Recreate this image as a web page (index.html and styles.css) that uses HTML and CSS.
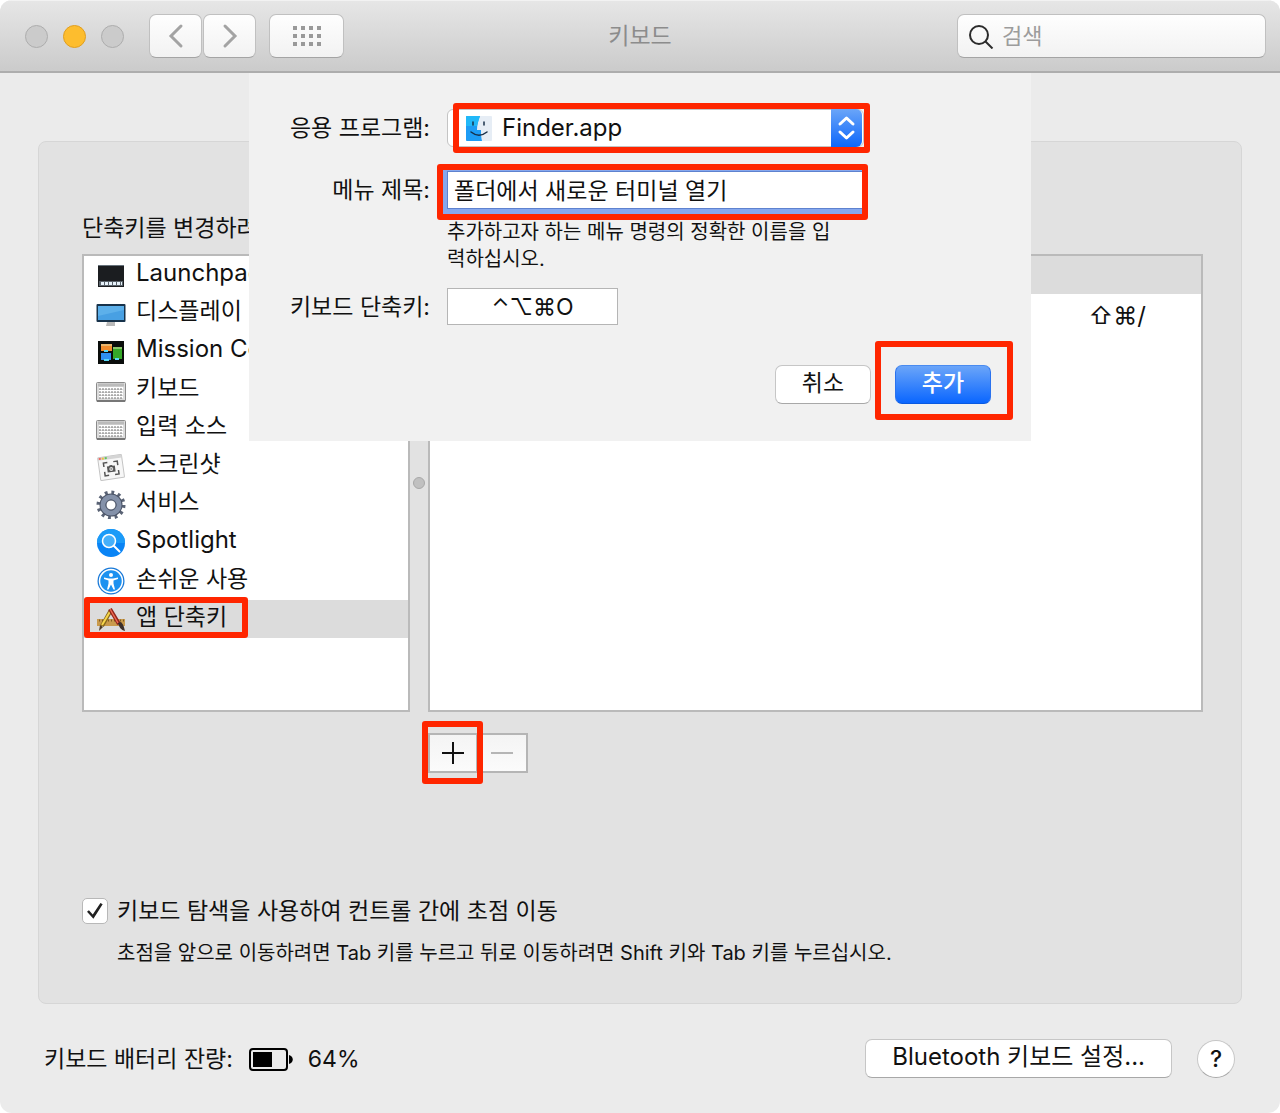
FILE: index.html
```html
<!DOCTYPE html>
<html lang="ko">

<head>
    <meta charset="UTF-8">
    <meta name="viewport" content="width=device-width, initial-scale=1.0">
    <title>키보드</title>
    <link rel="stylesheet" href="styles.css">
</head>

<body>
    <div class="window">

        <header class="titlebar">
            <div class="lights">
                <span class="light"></span>
                <span class="light light-yellow"></span>
                <span class="light"></span>
            </div>
            <nav class="nav-buttons">
                <button type="button" class="tool-btn" aria-label="뒤로">
                    <svg width="16" height="26" viewBox="0 0 16 26"><path d="M13 3 3 13l10 10" /></svg>
                </button>
                <button type="button" class="tool-btn" aria-label="앞으로">
                    <svg width="16" height="26" viewBox="0 0 16 26"><path d="m3 3 10 10L3 23" /></svg>
                </button>
            </nav>
            <button type="button" class="tool-btn tool-grid" aria-label="모두 보기">
                <svg width="28" height="20" viewBox="0 0 28 20">
                    <path d="M0 2h28M0 10h28M0 18h28" />
                </svg>
            </button>
            <h1>키보드</h1>
            <div class="search">
                <svg width="26" height="26" viewBox="0 0 26 26"><circle cx="11" cy="12" r="9" /><path d="m17.500 18.500 7 7" /></svg>
                <input type="search" placeholder="검색" aria-label="검색">
            </div>
        </header>

        <main>
            <section class="panel">
                <p class="intro">단축키를 변경하려면</p>

                <div class="lists">
                    <ul class="categories">
                        <li class="latin">
                            <svg class="icon" viewBox="0 0 30 30">
                                <rect x="2" y="5" width="26" height="22" fill="#1b1d20" />
                                <rect x="2" y="5" width="26" height="1" fill="#66717a" />
                                <rect x="3" y="21" width="24" height="5" fill="#59626a" />
                                <path d="M5 23.500h21" stroke="#e6f2fa" stroke-width="3" stroke-dasharray="3 1" />
                            </svg>
                            Launchpad
                        </li>
                        <li>
                            <svg class="icon" viewBox="0 0 30 30">
                                <path d="M11 24h8v4h-9z" fill="#b9b9b9" />
                                <rect x=".5" y="6" width="29" height="18" rx="1" fill="#17324a" />
                                <rect x="2" y="8" width="26" height="14" fill="#48a0e3" />
                                <path d="M2 8h26v4L2 18z" fill="#5db0ea" />
                            </svg>
                            디스플레이
                        </li>
                        <li class="latin">
                            <svg class="icon" viewBox="0 0 30 30">
                                <rect x="2" y="5" width="26" height="23" fill="#0a0d0b" />
                                <rect x="5" y="8" width="11" height="7" fill="#f08c2c" />
                                <rect x="5" y="17" width="10" height="7" fill="#2e8ff0" />
                                <rect x="17" y="11" width="9" height="12" fill="#35a828" />
                                <path d="M5 9h11M17 12h9" stroke="#e3e3b0" />
                                <path d="M8 15h4M8 24h5M19 23h4" stroke="#58d8f5" stroke-width="2" />
                            </svg>
                            Mission Control
                        </li>
                        <li>
                            <svg class="icon" viewBox="0 0 30 30">
                                <rect x=".5" y="8.500" width="29" height="19" rx="1" fill="#dcdcdc" stroke="#8b8b8b" />
                                <path d="M1 27h28" stroke="#777" stroke-width="2" />
                                <path d="M3 14h24M3 17h24M3 20h24M3 23h24" stroke="#fff" stroke-width="2" />
                                <path d="M3 15h24M3 18h24M3 21h24M3 24h24" stroke="#777" stroke-dasharray="2 1" />
                                <path d="M2 11h26" stroke="#bbb" stroke-width="3" />
                            </svg>
                            키보드
                        </li>
                        <li>
                            <svg class="icon" viewBox="0 0 30 30">
                                <rect x=".5" y="8.500" width="29" height="19" rx="1" fill="#dcdcdc" stroke="#8b8b8b" />
                                <path d="M1 27h28" stroke="#777" stroke-width="2" />
                                <path d="M3 14h24M3 17h24M3 20h24M3 23h24" stroke="#fff" stroke-width="2" />
                                <path d="M3 15h24M3 18h24M3 21h24M3 24h24" stroke="#777" stroke-dasharray="2 1" />
                                <path d="M2 11h26" stroke="#bbb" stroke-width="3" />
                            </svg>
                            입력 소스
                        </li>
                        <li>
                            <svg class="icon" viewBox="0 0 30 30">
                                <g transform="rotate(-8 15 16)">
                                    <rect x="3" y="5" width="24" height="23" rx="1" fill="#f7f7f7" stroke="#c4c4c4" />
                                    <path d="M3 6.500h24" stroke="#d5d5d5" stroke-width="3" />
                                    <path d="M4 6.500h2" stroke="#f0645c" stroke-width="2" />
                                    <path d="M7 6.500h2" stroke="#f2bd3d" stroke-width="2" />
                                    <path d="M10 6.500h2" stroke="#5fc457" stroke-width="2" />
                                    <path d="M8 15v-4h4M18 11h4v4M22 20v4h-4M12 24H8v-4" fill="none" stroke="#555" stroke-width="1.500" />
                                    <path d="M11 15h2l1-1h2l1 1h2v6h-8z" fill="#555" />
                                    <circle cx="15" cy="18" r="1.500" fill="#999" stroke="#ddd" />
                                </g>
                            </svg>
                            스크린샷
                        </li>
                        <li>
                            <svg class="icon" viewBox="0 0 30 30">
                                <circle cx="15" cy="16" r="12.500" fill="none" stroke="#5a6375" stroke-width="4" stroke-dasharray="2.800 3.745" />
                                <circle cx="15" cy="16" r="8" fill="none" stroke="#4b5467" stroke-width="7" />
                                <circle cx="15" cy="16" r="8" fill="none" stroke="#8491a9" stroke-width="5" />
                                <circle cx="15" cy="16" r="5" fill="#fff" stroke="#4b5467" />
                            </svg>
                            서비스
                        </li>
                        <li class="latin">
                            <svg class="icon" viewBox="0 0 30 30">
                                <circle cx="15" cy="16" r="14" fill="#0a84f5" />
                                <path d="M1 16a14 14 0 0 1 28 0z" fill="#1b9bf8" />
                                <circle cx="13" cy="14" r="6.500" fill="#47b0fa" stroke="#fff" stroke-width="1.500" />
                                <path d="m18 19 5.500 5.500" stroke="#fff" stroke-width="2" stroke-linecap="round" />
                            </svg>
                            Spotlight
                        </li>
                        <li>
                            <svg class="icon" viewBox="0 0 30 30">
                                <circle cx="15" cy="16" r="13.500" fill="#1778d8" />
                                <circle cx="15" cy="16" r="11.500" fill="#1c91f0" stroke="#fff" stroke-width="1.500" />
                                <circle cx="15" cy="10" r="2" fill="#fff" />
                                <path d="m8 12.500 5 1h4l5-1v1.500l-4.500 1.500v3l1.500 6h-1.500L15 19.500l-2.500 5H11l1.500-6v-3L8 14z" fill="#fff" />
                            </svg>
                            손쉬운 사용
                        </li>
                        <li class="selected">
                            <svg class="icon" viewBox="0 0 30 30">
                                <rect x="1" y="16" width="28" height="7" fill="#c99a4c" />
                                <path d="M3 17.500h25" stroke="#7d5a23" stroke-width="2" stroke-dasharray="1 2" />
                                <path d="m15 7-9 16" stroke="#87681c" stroke-width="4" />
                                <path d="M15 7 6 22" stroke="#f7d64c" stroke-width="2" />
                                <path d="m4 22 3 2-4 4z" fill="#4d3a25" />
                                <path d="m14 6 9 15" stroke="#8f231b" stroke-width="4" />
                                <path d="m14 6 8 14" stroke="#ee6b50" stroke-width="1.500" />
                                <path d="m22 20 3-1c3 3 3 6 4 9-4-1-6-4-7-8z" fill="#3c302b" />
                            </svg>
                            앱 단축키
                        </li>
                    </ul>

                    <div class="divider"><span></span></div>

                    <ul class="shortcuts">
                        <li class="selected"></li>
                        <li class="latin">⇧⌘/</li>
                    </ul>
                </div>

                <div class="list-buttons">
                    <div class="marked mark-add">
                        <button type="button" aria-label="추가">
                            <svg width="22" height="22" viewBox="0 0 22 22"><path d="M11 0v22M0 11h22" /></svg>
                        </button>
                    </div>
                    <button type="button" class="remove" aria-label="제거" disabled>
                        <svg width="22" height="22" viewBox="0 0 22 22"><path d="M0 11h22" /></svg>
                    </button>
                </div>

                <div class="navigation">
                    <input type="checkbox" id="tab-nav" checked>
                    <label for="tab-nav">키보드 탐색을 사용하여 컨트롤 간에 초점 이동</label>
                    <p>초점을 앞으로 이동하려면 Tab 키를 누르고 뒤로 이동하려면 Shift 키와 Tab 키를 누르십시오.</p>
                </div>
            </section>

            <!-- 단축키 추가 시트 -->
            <form class="sheet">
                <label for="app">응용 프로그램:</label>
                <div class="marked mark-app">
                    <select id="app" class="latin">
                        <option>Finder.app</option>
                    </select>
                    <svg class="finder" width="26" height="25" viewBox="0 0 26 25">
                        <rect width="26" height="25" rx="1" fill="#e6edf5" />
                        <path d="M1 0h13c-2 5-3 9-3 14h4c0 4 0 7 1 11H1a1 1 0 0 1-1-1V1a1 1 0 0 1 1-1z" fill="#1d9cf5" />
                        <path d="M1 0h13c-1 3-2 6-3 10H0V1a1 1 0 0 1 1-1z" fill="#21b8f8" />
                        <path d="M7 6v3M18 6v3M5 16c5 4 11 4 16 0" fill="none" stroke="#18304a" stroke-width="1.500" stroke-linecap="round" />
                    </svg>
                    <svg class="stepper" width="31" height="38" viewBox="0 0 31 38">
                        <path d="m9 15 6.500-6 6.500 6M9 23l6.500 6 6.500-6" />
                    </svg>
                </div>

                <label for="menu-title">메뉴 제목:</label>
                <div class="marked mark-title">
                    <input type="text" id="menu-title" value="폴더에서 새로운 터미널 열기">
                </div>
                <p class="hint">추가하고자 하는 메뉴 명령의 정확한 이름을 입력하십시오.</p>

                <label for="shortcut">키보드 단축키:</label>
                <input type="text" id="shortcut" value="⌃⌥⌘O">

                <div class="actions">
                    <button type="button" class="btn">취소</button>
                    <div class="marked mark-submit">
                        <button type="submit" class="btn btn-primary">추가</button>
                    </div>
                </div>
            </form>
        </main>

        <footer>
            <span>키보드 배터리 잔량:</span>
            <svg class="battery" width="44" height="24" viewBox="0 0 44 24">
                <rect x="1" y="1" width="37" height="21" rx="3" fill="none" stroke="#000" stroke-width="2" />
                <rect x="4" y="4" width="19" height="15" />
                <path d="M40 7c5 1 5 8 0 9z" />
            </svg>
            <span>64%</span>
            <button type="button" class="btn btn-bluetooth latin">Bluetooth 키보드 설정...</button>
            <button type="button" class="btn help">?</button>
        </footer>

    </div>
</body>

</html>
```
FILE: styles.css
```css
* {
    box-sizing: border-box;
}

body {
    margin: 0;
    background-color: #fff;
    color: #111;
    font-family: Inter, 'Noto Sans CJK KR', sans-serif;
    font-size: 23px;
    line-height: 32px;
}

button,
input,
select {
    margin: 0;
    font: inherit;
    color: inherit;
}

h1,
p,
ul {
    margin: 0;
    padding: 0;
}

ul {
    list-style: none;
}

svg {
    display: block;
    flex: none;
}

.latin {
    font-size: 24px;
}

.window {
    display: flex;
    flex-direction: column;
    min-height: 100vh;
    background-color: #ebebeb;
    border-radius: 12px;
    overflow: hidden;
}

/* 제목 막대 */
.titlebar {
    position: relative;
    display: flex;
    align-items: center;
    height: 73px;
    padding: 0 14px 0 25px;
    background: linear-gradient(#e6e6e6, #cbcbcb);
    border-top: 1px solid #f2f2f2;
    border-bottom: 2px solid #adadad;
}

.lights {
    display: flex;
    gap: 15px;
    margin-right: 25px;
}

.light {
    width: 23px;
    height: 23px;
    border: 1px solid #adadad;
    border-radius: 50%;
    background-color: #cbcbcb;
}

.light-yellow {
    background-color: #fdbd2e;
    border-color: #e09e20;
}

.nav-buttons {
    display: flex;
    gap: 1px;
    margin-right: 13px;
}

.tool-btn {
    display: flex;
    align-items: center;
    justify-content: center;
    width: 53px;
    height: 44px;
    padding: 0;
    background: linear-gradient(#fefefe, #f2f2f2);
    border: 1px solid #c0c0c0;
    border-bottom-color: #a4a4a4;
    border-radius: 7px;
}

.tool-btn svg {
    fill: none;
    stroke: #a3a3a3;
    stroke-width: 3;
    stroke-linecap: round;
}

.tool-grid {
    width: 75px;
}

.tool-grid svg {
    stroke: #999;
    stroke-width: 4;
    stroke-linecap: butt;
    stroke-dasharray: 4 4;
}

.titlebar h1 {
    position: absolute;
    left: 50%;
    transform: translateX(-50%);
    font-size: 23px;
    font-weight: 400;
    color: #8c8c8c;
}

.search {
    display: flex;
    align-items: center;
    gap: 8px;
    width: 309px;
    height: 44px;
    margin-left: auto;
    padding: 0 10px;
    background: linear-gradient(#fefefe, #f2f2f2);
    border: 1px solid #c0c0c0;
    border-bottom-color: #a4a4a4;
    border-radius: 7px;
}

.search svg {
    fill: none;
    stroke: #2b2b2b;
    stroke-width: 2;
}

.search input {
    flex: 1;
    min-width: 0;
    padding: 0;
    border: 0;
    background: none;
    outline: none;
    font-size: 22px;
}

.search input::placeholder {
    color: #9c9c9c;
}

/* 본문 */
main {
    position: relative;
    padding: 68px 38px 0;
}

.panel {
    padding: 70px 38px 34px 43px;
    background-color: #e2e2e2;
    border: 1px solid #d6d6d6;
    border-radius: 8px;
}

.intro {
    margin-bottom: 10px;
}

.lists {
    display: flex;
}

.categories,
.shortcuts {
    background-color: #fff;
    border: 2px solid #bababa;
}

.categories {
    display: grid;
    grid-template-rows: repeat(10, 1fr);
    width: 328px;
    height: 458px;
    padding-bottom: 72px;
}

.shortcuts {
    flex: 1;
}

.categories li {
    display: flex;
    align-items: center;
    gap: 10px;
    min-height: 0;
    padding: 0 12px 4px;
}

.shortcuts li {
    height: 38px;
    padding: 6px 55px 0;
    text-align: right;
}

.lists .selected {
    background-color: #dcdcdc;
}

.icon {
    width: 30px;
    height: 30px;
    margin-top: 3px;
}

.divider {
    display: flex;
    align-items: center;
    justify-content: center;
    width: 18px;
}

.divider span {
    width: 12px;
    height: 12px;
    border: 1px solid #a8a8a8;
    border-radius: 50%;
    background-color: #c0c0c0;
}

.list-buttons {
    display: flex;
    margin: 21px 0 122px 346px;
}

.list-buttons button {
    display: flex;
    align-items: center;
    justify-content: center;
    width: 50px;
    height: 40px;
    padding: 0;
    background: linear-gradient(#f4f4f4, #fbfbfb);
    border: 2px solid #b5b5b5;
}

.list-buttons .remove {
    border-left: 0;
}

.list-buttons svg {
    stroke: #111;
    stroke-width: 2;
}

.list-buttons .remove svg {
    stroke: #b5b5b5;
}

.navigation {
    display: grid;
    grid-template-columns: 26px 1fr;
    align-items: center;
    column-gap: 9px;
    row-gap: 10px;
}

.navigation p {
    grid-column: 2;
    font-size: 20px;
}

input[type="checkbox"] {
    appearance: none;
    width: 26px;
    height: 26px;
    background-color: #fff;
    border: 1px solid #b8b8b8;
    border-radius: 5px;
    display: grid;
    place-items: center;
}

input[type="checkbox"]:checked::before {
    content: "";
    width: 16px;
    height: 16px;
    background-color: #222;
    clip-path: polygon(0 55%, 12% 46%, 36% 72%, 84% 0, 98% 8%, 40% 98%);
}

/* 시트 */
.sheet {
    position: absolute;
    top: 0;
    left: 50%;
    transform: translateX(-50%);
    display: grid;
    grid-template-columns: 181px 1fr;
    column-gap: 17px;
    align-items: center;
    width: 782px;
    padding: 36px 40px 37px 0;
    background-color: #f1f1f1;
}

.sheet label {
    text-align: right;
}

.sheet input {
    display: block;
    background-color: #fff;
    outline: none;
}

.sheet select {
    display: block;
    appearance: none;
    width: 100%;
    height: 38px;
    padding: 0 40px 0 54px;
    background-color: #fff;
    border: 1px solid #c4c4c4;
    border-radius: 6px;
}

.finder {
    position: absolute;
    top: 7px;
    left: 19px;
}

.stepper {
    position: absolute;
    top: 0;
    right: 2px;
    background: linear-gradient(#6aa5f8, #0d67fb);
    border-radius: 0 6px 6px 0;
    fill: none;
    stroke: #fff;
    stroke-width: 3;
    stroke-linecap: round;
    stroke-linejoin: round;
    pointer-events: none;
}

#menu-title {
    width: 100%;
    height: 38px;
    padding: 0 6px 2px;
    border: 1px solid #5e82cf;
    box-shadow: -1px 1px 0 4px #86a8ee;
}

.hint {
    grid-column: 2;
    width: 400px;
    margin: 10px 0 15px;
    font-size: 20px;
    line-height: 27px;
}

#shortcut {
    width: 171px;
    height: 37px;
    padding: 0;
    border: 1px solid #b5b5b5;
    text-align: center;
}

.actions {
    grid-column: 1 / 3;
    display: flex;
    justify-content: flex-end;
    gap: 24px;
    margin-top: 40px;
}

.btn {
    min-width: 96px;
    height: 39px;
    padding: 0 0 3px;
    background-color: #fff;
    border: 1px solid #c6c6c6;
    border-bottom-color: #a8a8a8;
    border-radius: 7px;
}

.btn-primary {
    background: linear-gradient(#6ba5f9, #0a66ff);
    border-color: #4a8bf0 #2a72ee #0a59e0;
    color: #fff;
    font-weight: 500;
}

/* 빨간 강조 테두리 */
.marked {
    position: relative;
}

.marked::after {
    content: "";
    position: absolute;
    border: 6px solid #ff2600;
    border-radius: 3px;
    pointer-events: none;
}

.mark-app,
.mark-title {
    width: 417px;
}

.sheet label[for="app"],
.mark-app {
    margin-bottom: 24px;
}

.mark-app::after {
    inset: -6px -6px -6px 6px;
}

.mark-title::after {
    inset: -7px -4px -11px -10px;
}

.mark-submit::after {
    inset: -24px -22px -16px -20px;
}

.mark-add::after {
    inset: -12px -5px -11px -6px;
}

.categories .selected {
    position: relative;
}

.categories .selected::after {
    content: "";
    position: absolute;
    inset: -3px 160px 0 0;
    border: 6px solid #ff2600;
    border-radius: 3px;
}

/* 하단 */
footer {
    display: flex;
    align-items: center;
    padding: 35px 45px 34px 44px;
}

.battery {
    margin: 3px 15px 0 16px;
}

.btn-bluetooth {
    margin-left: auto;
    padding: 0 26px 3px;
}

.help {
    min-width: 38px;
    height: 38px;
    margin-left: 25px;
    padding: 0;
    border-radius: 50%;
    font-weight: 500;
}
```
